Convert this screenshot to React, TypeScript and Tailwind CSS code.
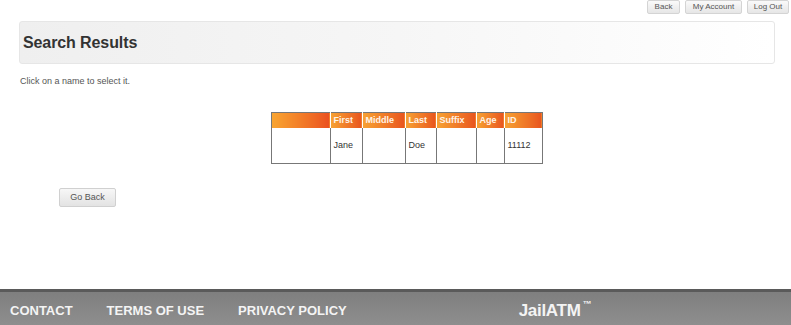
import React from 'react'

const cols = ['First', 'Middle', 'Last', 'Suffix', 'Age', 'ID']
const widths = ['w-[59px]', 'w-[32px]', 'w-[43px]', 'w-[31px]', 'w-[40px]', 'w-[28px]', 'w-[38px]']
const row = ['', 'Jane', '', 'Doe', '', '', '11112']

function SmallButton({ children, className = '' }: { children: React.ReactNode; className?: string }) {
  return (
    <button className={`h-[14px] px-0 whitespace-nowrap rounded-[2px] border border-[#d4d4d4] bg-gradient-to-b from-[#fafafa] to-[#e6e6e6] text-[8px] leading-[12px] text-[#555] ${className}`}>
      {children}
    </button>
  )
}

export default function App() {
  return (
    <div className="w-[791px] h-[325px] flex flex-col bg-white overflow-hidden font-['Liberation_Sans',Arial,sans-serif]">
      <div className="flex-1 flex flex-col">
        <div className="flex justify-end gap-[5px] pr-[2px] h-[15px]">
          <SmallButton className="w-[33px]">Back</SmallButton>
          <SmallButton className="w-[57px]">My Account</SmallButton>
          <SmallButton className="w-[42px]">Log Out</SmallButton>
        </div>

        <div className="ml-[19px] mr-[16px] mt-[6px] h-[43px] rounded-[3px] border border-[#e6e6e6] bg-gradient-to-r from-[#efefef] via-[#f6f6f6] to-white flex items-center px-[3px]">
          <h1 className="text-[16px] font-bold text-[#333] tracking-[-0.1px]">Search Results</h1>
        </div>

        <p className="ml-[20px] mt-[11px] text-[9px] text-[#555]">Click on a name to select it.</p>

        <div className="flex justify-center pl-[22px] mt-[23px]">
          <table className="border-collapse border border-[#777]">
            <thead>
              <tr className="h-[16px]">
                <th className={`${widths[0]} p-0 bg-gradient-to-r from-[#f8a531] to-[#ea4f1f]`}></th>
                {cols.map((c, i) => (
                  <th
                    key={c}
                    className={`${widths[i + 1]} p-0 px-[3px] text-left text-[9px] font-bold text-[#fff4e8] border-l border-white bg-gradient-to-r from-[#f6a233] to-[#e8541f]`}
                  >
                    {c}
                  </th>
                ))}
              </tr>
            </thead>
            <tbody>
              <tr className="h-[35px]">
                {row.map((v, i) => (
                  <td key={i} className={`${widths[i]} px-[3px] text-[9px] text-[#333] border-l border-[#777] align-middle`}>
                    {v}
                  </td>
                ))}
              </tr>
            </tbody>
          </table>
        </div>

        <div className="ml-[59px] mt-[19px]">
          <button className="w-[57px] h-[19px] rounded-[2px] border border-[#d0d0d0] bg-gradient-to-b from-[#f7f7f7] to-[#e3e3e3] text-[9px] text-[#555]">
            Go Back
          </button>
        </div>
      </div>

      <footer className="h-[36px] pt-[4px] border-t-[3px] border-[#5a5a5a] bg-gradient-to-b from-[#7f7f7f] to-[#8e8e8e] flex items-center text-[#f4f4f4] font-bold">
        <span className="ml-[10px] text-[13px]">CONTACT</span>
        <span className="ml-[34px] text-[13px]">TERMS OF USE</span>
        <span className="ml-[34px] text-[13px]">PRIVACY POLICY</span>
        <span className="ml-[172px] text-[17px] tracking-[-0.3px]">JailATM<span className="text-[9px] align-top ml-[2px]">™</span></span>
      </footer>
    </div>
  )
}
